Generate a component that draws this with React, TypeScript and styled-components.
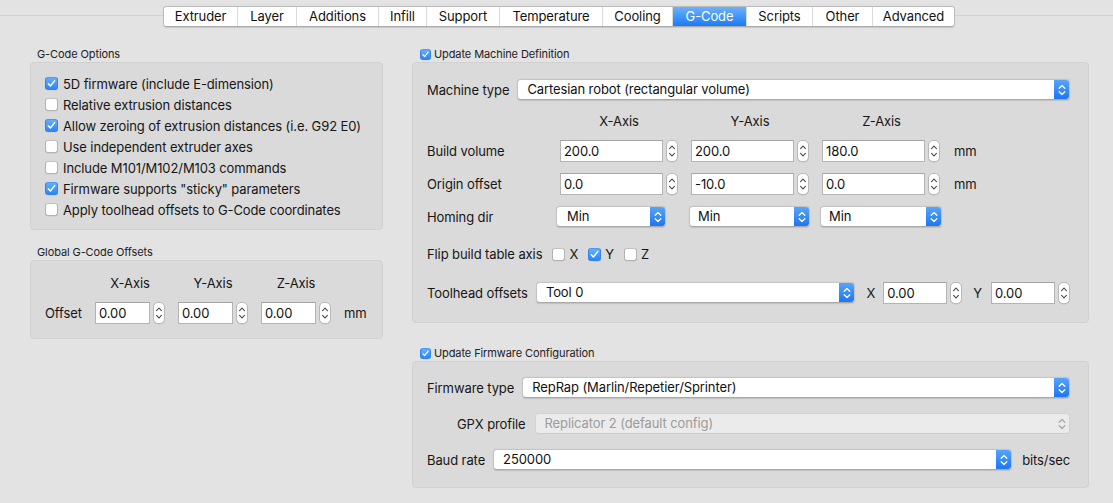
import React from "react";
import styled, { createGlobalStyle } from "styled-components";

const Global = createGlobalStyle`
  html, body { margin: 0; padding: 0; background: #e3e3e3; }
  body {
    font-family: Inter, "Noto Sans", "Liberation Sans", sans-serif;
    font-size: 13px;
    letter-spacing: -0.1px;
    color: #161616;
    width: 1113px;
    height: 503px;
    overflow: hidden;
  }
  * { box-sizing: border-box; }
`;

const Window = styled.div`
  width: 1113px;
  height: 503px;
  display: flex;
  flex-direction: column;
  background: #e3e3e3;
`;

const TabStrip = styled.div`
  display: flex;
  padding: 6px 0 0 163px;
  background: linear-gradient(#d2d2d2, #d2d2d2) 0 15px / 100% 1px no-repeat;
`;

const TabGroup = styled.div`
  display: flex;
  height: 21px;
  border: 1px solid #bcbcbc;
  border-bottom-color: #aaaaaa;
  border-radius: 4px;
  overflow: hidden;
  background: #ffffff;
  box-shadow: 0 0.5px 1px rgba(0, 0, 0, 0.12);
`;

const Tab = styled.div<{ $w: number; $active?: boolean }>`
  width: ${(p) => p.$w}px;
  height: 19px;
  line-height: 19px;
  text-align: center;
  font-size: 13px;
  color: ${(p) => (p.$active ? "#ffffff" : "#111111")};
  background: ${(p) => (p.$active ? "linear-gradient(#6cb1fa, #1a7cf5)" : "#ffffff")};
  & + & {
    border-left: 1px solid ${(p) => (p.$active ? "#3d8ff6" : "#dadada")};
  }
`;

const Content = styled.div`
  display: flex;
  gap: 29px;
  padding: 20px 24px 0 30px;
`;

const Column = styled.div<{ $w?: number }>`
  display: flex;
  flex-direction: column;
  ${(p) => (p.$w ? `width: ${p.$w}px;` : "flex: 1;")}
`;

const SectionTitle = styled.div<{ $top?: number; $indent?: number }>`
  display: flex;
  align-items: center;
  gap: 3px;
  font-size: 11px;
  line-height: 14px;
  height: 14px;
  color: #222;
  margin: ${(p) => p.$top ?? 0}px 0 1px ${(p) => p.$indent ?? 7}px;
`;

const Panel = styled.div<{ $pad: string }>`
  background: #dadada;
  border: 1px solid #d1d1d1;
  border-radius: 4px;
  padding: ${(p) => p.$pad};
  display: flex;
  flex-direction: column;
`;

const CheckRow = styled.label`
  display: flex;
  align-items: center;
  gap: 5px;
  height: 21px;
`;

const Box = styled.span<{ $on?: boolean; $size: number }>`
  width: ${(p) => p.$size}px;
  height: ${(p) => p.$size}px;
  flex: none;
  border-radius: 3px;
  display: inline-flex;
  align-items: center;
  justify-content: center;
  border: 1px solid ${(p) => (p.$on ? "#2f84ef" : "#b3b3b3")};
  border-top-color: ${(p) => (p.$on ? "#4c97f5" : "#c2c2c2")};
  background: ${(p) => (p.$on ? "linear-gradient(#66aefa, #2c86f5)" : "#ffffff")};
  box-shadow: 0 0.5px 0.5px rgba(0, 0, 0, 0.08);
`;

function Check({ on, size = 13 }: { on?: boolean; size?: number }) {
  return (
    <Box $on={on} $size={size}>
      {on && (
        <svg width={size - 2} height={size - 2} viewBox="0 0 11 11">
          <path d="M2.3 5.7 L4.4 8 L8.7 2.6" fill="none" stroke="#fff" strokeWidth="1.5" strokeLinecap="round" strokeLinejoin="round" />
        </svg>
      )}
    </Box>
  );
}

const OffsetGrid = styled.div`
  display: grid;
  grid-template-columns: 37px 70px 70px 70px auto;
  grid-template-rows: 16px 22px;
  column-gap: 13px;
  row-gap: 11px;
  align-items: center;
`;

const AxisGrid = styled.div`
  display: grid;
  grid-template-columns: 120px 118px 118px 119px auto;
  grid-template-rows: 16px 22px 22px 21px;
  column-gap: 13px;
  row-gap: 11px;
  align-items: center;
  margin-top: 13px;
`;

const AxisHead = styled.div`
  text-align: center;
  line-height: 16px;
`;

const Label = styled.span<{ $gap?: number }>`
  white-space: nowrap;
  margin-right: ${(p) => p.$gap ?? 0}px;
`;

const Combo = styled.div`
  display: flex;
  align-items: center;
  gap: 3px;
`;

const Field = styled.input<{ $w: number }>`
  width: ${(p) => p.$w}px;
  height: 22px;
  border: 1px solid #b4b4b4;
  border-top-color: #a6a6a6;
  background: #fff;
  font: inherit;
  font-size: 13px;
  letter-spacing: -0.1px;
  color: #111;
  padding: 0 3px;
  margin: 0;
  outline: none;
  border-radius: 0;
`;

const StepBox = styled.span`
  width: 12px;
  height: 22px;
  flex: none;
  border: 1px solid #b9b9b9;
  border-radius: 5px;
  background: #fff;
  display: inline-flex;
  box-shadow: 0 0.5px 0.5px rgba(0, 0, 0, 0.1);
`;

function Stepper() {
  return (
    <StepBox>
      <svg width="10" height="20" viewBox="0 0 10 20">
        <path d="M2.6 7.6 L5 5 L7.4 7.6" fill="none" stroke="#444" strokeWidth="1.1" strokeLinecap="round" strokeLinejoin="round" />
        <path d="M2.6 12.4 L5 15 L7.4 12.4" fill="none" stroke="#444" strokeWidth="1.1" strokeLinecap="round" strokeLinejoin="round" />
      </svg>
    </StepBox>
  );
}

function Spin({ value, w }: { value: string; w: number }) {
  return (
    <Combo>
      <Field $w={w} value={value} readOnly />
      <Stepper />
    </Combo>
  );
}

const PopupBox = styled.div<{ $w?: number; $shift?: number; $disabled?: boolean }>`
  ${(p) => (p.$w ? `width: ${p.$w}px; flex: none;` : "flex: 1; min-width: 0;")}
  margin-left: ${(p) => p.$shift ?? 0}px;
  height: 21px;
  display: flex;
  align-items: stretch;
  border-radius: 4px;
  border: 1px solid ${(p) => (p.$disabled ? "#d2d2d2" : "#c4c4c4")};
  border-bottom-color: ${(p) => (p.$disabled ? "#cccccc" : "#a9a9a9")};
  background: ${(p) => (p.$disabled ? "#ebebeb" : "#ffffff")};
  box-shadow: ${(p) => (p.$disabled ? "none" : "0 0.5px 1px rgba(0,0,0,0.12)")};
  overflow: hidden;
`;

const PopupText = styled.span<{ $disabled?: boolean; $pad?: number }>`
  flex: 1;
  padding-left: ${(p) => p.$pad ?? 9}px;
  line-height: 19px;
  color: ${(p) => (p.$disabled ? "#9c9c9c" : "#111")};
  white-space: nowrap;
  overflow: hidden;
`;

const PopupArrow = styled.span<{ $disabled?: boolean }>`
  width: 16px;
  flex: none;
  display: inline-flex;
  align-items: center;
  justify-content: center;
  background: ${(p) => (p.$disabled ? "transparent" : "linear-gradient(#5aa6fa, #1b74f1)")};
  margin: -1px -1px -1px 0;
  border-radius: 0 4px 4px 0;
`;

function Popup({ text, w, shift, disabled, pad }: { text: string; w?: number; shift?: number; disabled?: boolean; pad?: number }) {
  const c = disabled ? "#a8a8a8" : "#ffffff";
  return (
    <PopupBox $w={w} $shift={shift} $disabled={disabled}>
      <PopupText $disabled={disabled} $pad={pad}>{text}</PopupText>
      <PopupArrow $disabled={disabled}>
        <svg width="10" height="16" viewBox="0 0 10 16">
          <path d="M2.2 6.2 L5 3.5 L7.8 6.2" fill="none" stroke={c} strokeWidth="1.3" strokeLinecap="round" strokeLinejoin="round" />
          <path d="M2.2 9.8 L5 12.5 L7.8 9.8" fill="none" stroke={c} strokeWidth="1.3" strokeLinecap="round" strokeLinejoin="round" />
        </svg>
      </PopupArrow>
    </PopupBox>
  );
}

const FormRow = styled.div<{ $top?: number; $indent?: number; $h?: number }>`
  display: flex;
  align-items: center;
  height: ${(p) => p.$h ?? 21}px;
  margin-top: ${(p) => p.$top ?? 0}px;
  padding-left: ${(p) => p.$indent ?? 0}px;
`;

const FlipItem = styled.span`
  display: inline-flex;
  align-items: center;
  gap: 4px;
  margin-right: 10px;
`;

const Unit = styled.span<{ $left?: number }>`
  margin-left: ${(p) => p.$left ?? 0}px;
  white-space: nowrap;
`;

const tabs: [string, number][] = [
  ["Extruder", 73],
  ["Layer", 59],
  ["Additions", 82],
  ["Infill", 48],
  ["Support", 73],
  ["Temperature", 103],
  ["Cooling", 70],
  ["G-Code", 74],
  ["Scripts", 66],
  ["Other", 60],
  ["Advanced", 82],
];

const options: [string, boolean][] = [
  ["5D firmware (include E-dimension)", true],
  ["Relative extrusion distances", false],
  ["Allow zeroing of extrusion distances (i.e. G92 E0)", true],
  ["Use independent extruder axes", false],
  ["Include M101/M102/M103 commands", false],
  ['Firmware supports "sticky" parameters', true],
  ["Apply toolhead offsets to G-Code coordinates", false],
];

export default function App() {
  return (
    <Window>
      <Global />
      <TabStrip>
        <TabGroup>
          {tabs.map(([t, w]) => (
            <Tab key={t} $w={w} $active={t === "G-Code"}>
              {t}
            </Tab>
          ))}
        </TabGroup>
      </TabStrip>
      <Content>
        <Column $w={353}>
          <SectionTitle>G-Code Options</SectionTitle>
          <Panel $pad="10px 0 9px 14px">
            {options.map(([t, on]) => (
              <CheckRow key={t}>
                <Check on={on} />
                <span>{t}</span>
              </CheckRow>
            ))}
          </Panel>
          <SectionTitle $top={15}>Global G-Code Offsets</SectionTitle>
          <Panel $pad="14px 0 14px 14px">
            <OffsetGrid>
              <span />
              <AxisHead>X-Axis</AxisHead>
              <AxisHead>Y-Axis</AxisHead>
              <AxisHead>Z-Axis</AxisHead>
              <span />
              <Label>Offset</Label>
              <Spin value="0.00" w={55} />
              <Spin value="0.00" w={55} />
              <Spin value="0.00" w={55} />
              <Unit>mm</Unit>
            </OffsetGrid>
          </Panel>
        </Column>
        <Column>
          <SectionTitle $indent={8}>
            <Check on size={11} />
            Update Machine Definition
          </SectionTitle>
          <Panel $pad="16px 18px 19px 14px">
            <FormRow>
              <Label $gap={8}>Machine type</Label>
              <Popup text="Cartesian robot (rectangular volume)" />
            </FormRow>
            <AxisGrid>
              <span />
              <AxisHead>X-Axis</AxisHead>
              <AxisHead>Y-Axis</AxisHead>
              <AxisHead>Z-Axis</AxisHead>
              <span />
              <Label>Build volume</Label>
              <Spin value="200.0" w={103} />
              <Spin value="200.0" w={103} />
              <Spin value="180.0" w={103} />
              <Unit>mm</Unit>
              <Label>Origin offset</Label>
              <Spin value="0.0" w={103} />
              <Spin value="-10.0" w={103} />
              <Spin value="0.0" w={103} />
              <Unit>mm</Unit>
              <Label>Homing dir</Label>
              <Popup text="Min" w={110} shift={-4} pad={10} />
              <Popup text="Min" w={121} shift={-2} pad={8} />
              <Popup text="Min" w={122} shift={-2} pad={8} />
              <span />
            </AxisGrid>
            <FormRow $top={19} $h={16}>
              <Label $gap={10}>Flip build table axis</Label>
              <FlipItem>
                <Check />X
              </FlipItem>
              <FlipItem>
                <Check on />Y
              </FlipItem>
              <FlipItem>
                <Check />Z
              </FlipItem>
            </FormRow>
            <FormRow $top={20}>
              <Label $gap={8}>Toolhead offsets</Label>
              <Popup text="Tool 0" />
              <Unit $left={11}>X</Unit>
              <Unit $left={8}>
                <Spin value="0.00" w={64} />
              </Unit>
              <Unit $left={11}>Y</Unit>
              <Unit $left={9}>
                <Spin value="0.00" w={64} />
              </Unit>
            </FormRow>
          </Panel>
          <SectionTitle $top={23} $indent={8}>
            <Check on size={11} />
            Update Firmware Configuration
          </SectionTitle>
          <Panel $pad="15px 18px 17px 14px">
            <FormRow>
              <Label $gap={8}>Firmware type</Label>
              <Popup text="RepRap (Marlin/Repetier/Sprinter)" />
            </FormRow>
            <FormRow $top={15} $indent={30}>
              <Label $gap={9}>GPX profile</Label>
              <Popup text="Replicator 2 (default config)" disabled />
            </FormRow>
            <FormRow $top={15}>
              <Label $gap={8}>Baud rate</Label>
              <Popup text="250000" />
              <Unit $left={10}>bits/sec</Unit>
            </FormRow>
          </Panel>
        </Column>
      </Content>
    </Window>
  );
}
